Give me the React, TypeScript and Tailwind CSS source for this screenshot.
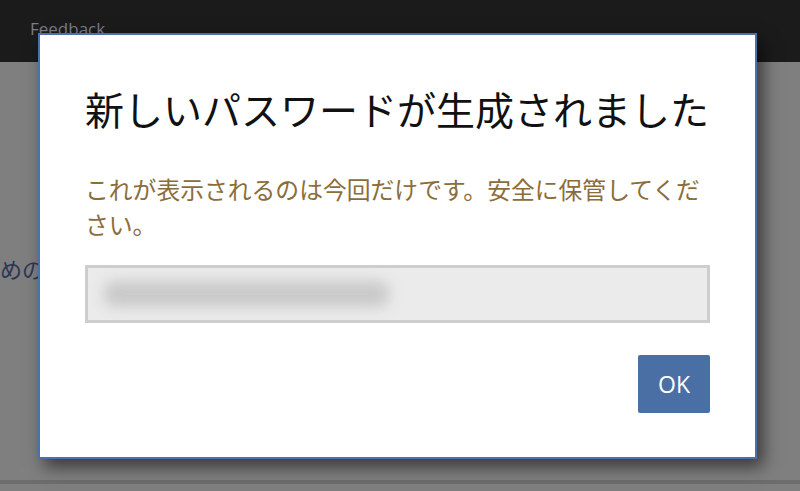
import * as React from "react";

const jp = "font-['Meiryo','Noto_Sans_CJK_JP',sans-serif]";

function PasswordDialog() {
  return (
    <div className="absolute left-[38px] top-[33px] flex h-[426px] w-[719px] flex-col border-2 border-[#4a72a8] bg-white px-[45px] pt-[49px] shadow-[6px_8px_16px_rgba(0,0,0,0.55)]">
      <h2 className={`${jp} text-[39px] leading-[48px] text-[#111]`}>新しいパスワードが生成されました</h2>
      <p className={`${jp} mt-[39px] text-[23.8px] leading-[35px] text-[#8a6d3b]`}>
        これが表示されるのは今回だけです。安全に保管してください。
      </p>
      <div className="mt-[24px] flex h-[58px] items-center overflow-hidden border-[3px] border-[#cdcdcd] bg-[#ebebeb] px-[16px]">
        <div className="h-[26px] w-[285px] rounded-[10px] bg-[#c9c9c9] blur-[7px]" />
      </div>
      <div className="mt-[32px] flex justify-end">
        <button className="h-[58px] w-[72px] rounded-[2px] bg-[#4a6fa5] font-['Segoe_UI','Open_Sans',sans-serif] text-[23px] text-white">
          OK
        </button>
      </div>
    </div>
  );
}

export default function App() {
  return (
    <div className="relative h-[491px] w-[800px] overflow-hidden bg-[#7f7f7f]">
      <div className="h-[62px] bg-[#1b1b1b] px-[30px] pt-[16px]">
        <span className="font-['Segoe_UI','Open_Sans',sans-serif] text-[17px] text-[#7c7c8a]">Feedback</span>
      </div>
      <div className="flex h-[418px] flex-col">
        <div className={`${jp} mt-[190px] text-[22px] text-[#2c3752]`}>めの手順</div>
      </div>
      <div className="h-[4px] bg-[#6d6d6d]" />
      <PasswordDialog />
    </div>
  );
}
